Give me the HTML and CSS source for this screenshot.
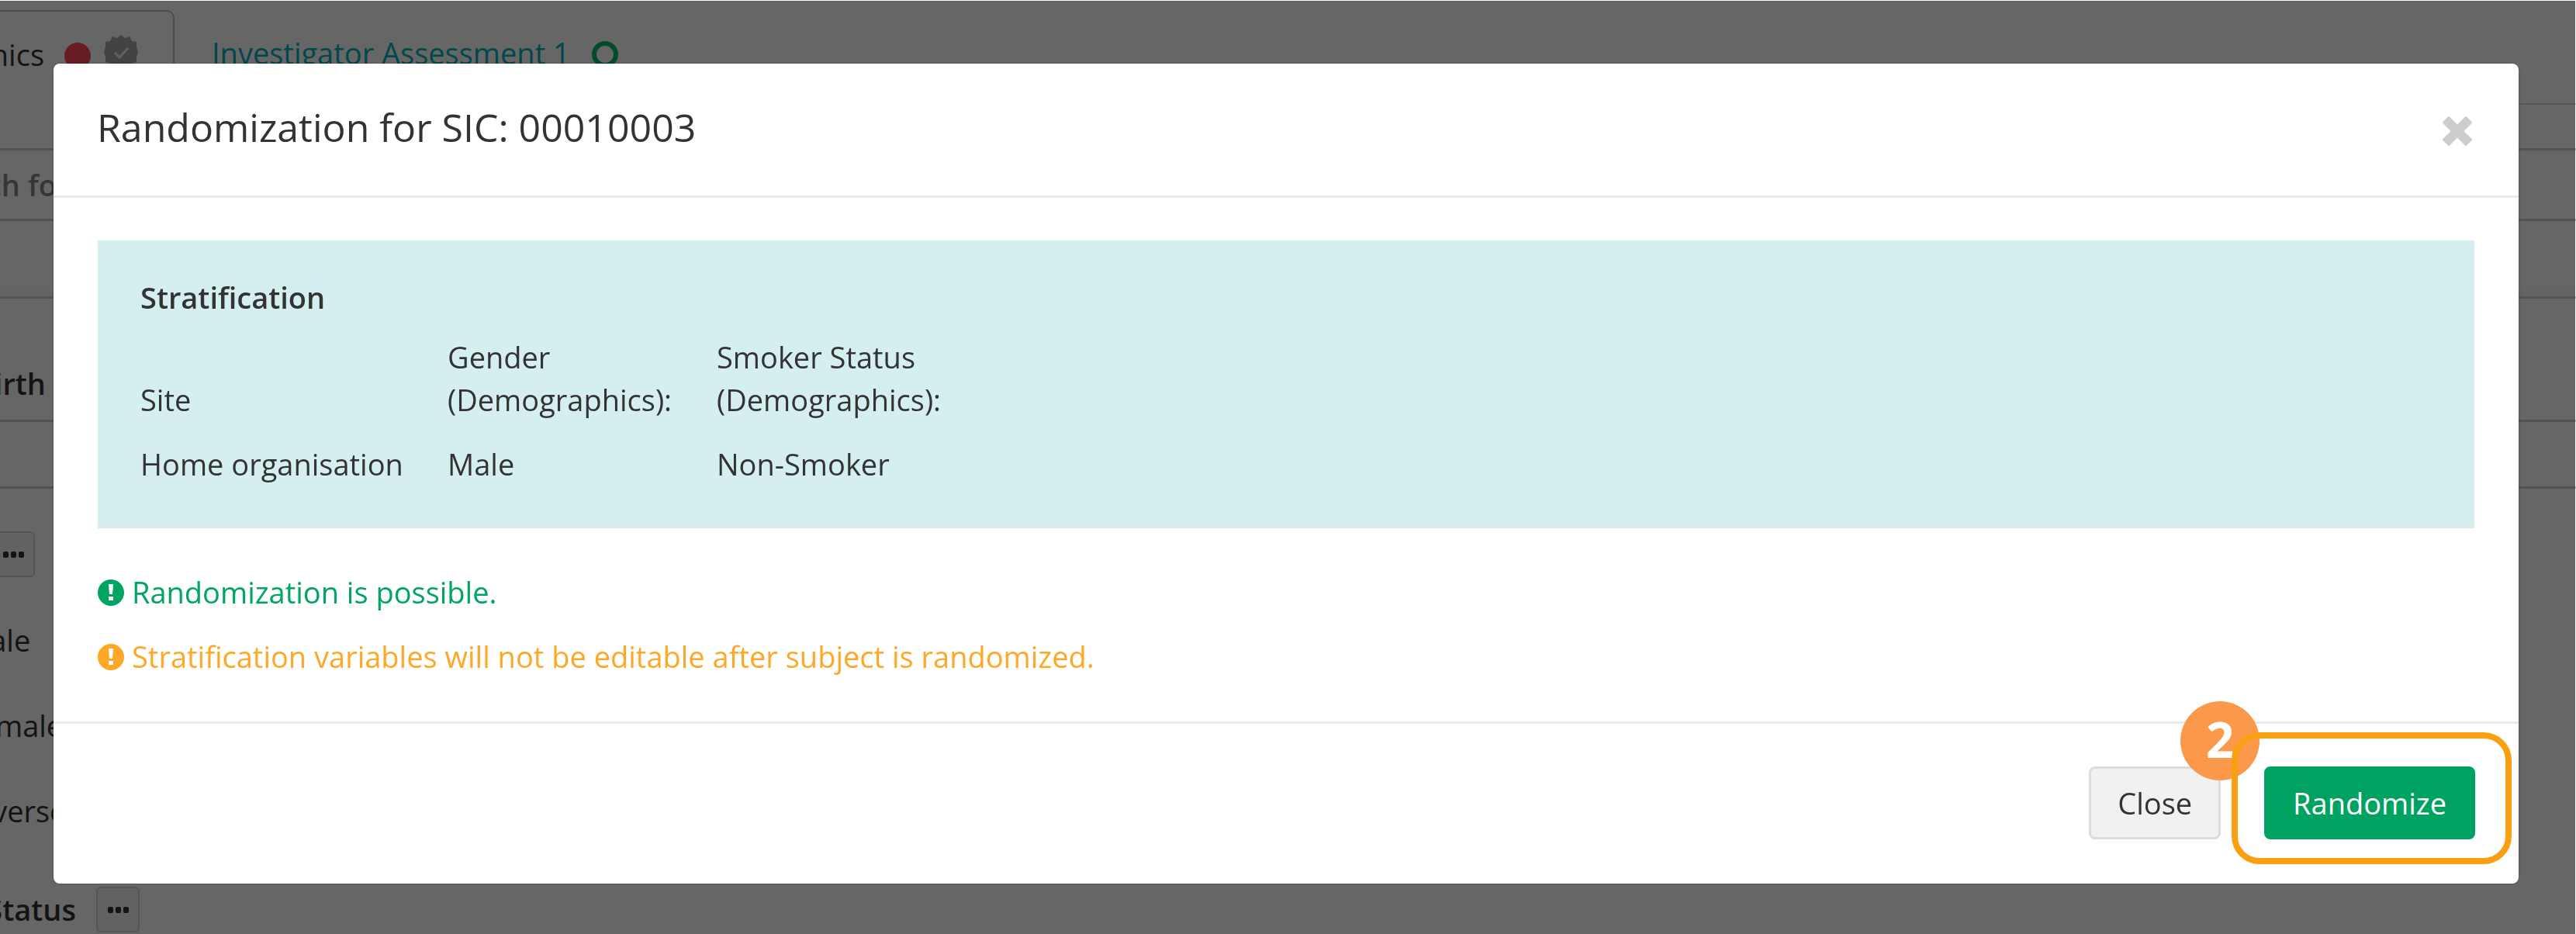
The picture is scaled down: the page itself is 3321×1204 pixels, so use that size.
FILE: index.html
```
<!DOCTYPE html>
<html lang="en">
<head>
<meta charset="utf-8">
<title>Randomization</title>
<link rel="stylesheet" href="styles.css">
</head>
<body>
<main class="page">
  <nav class="tabs">
    <a class="tab tab-active" href="#demographics">
      <span class="clip clip-tab">hics</span>
      <svg class="dot" viewBox="0 0 34 34"><circle cx="17" cy="17" r="17" fill="#ff4655"/></svg>
      <svg class="verified" viewBox="0 0 44 46"><path d="M22 0l5 4 6-2 3 6 6 1v6l2 7-2 7v6l-6 2-3 6-6-1-5 4-5-4-6 1-3-6-6-2v-6l-2-7 2-7V9l6-1 3-6 6 2z" fill="#a8a8a8"/><path d="M14 23l6 6 11-12" fill="none" stroke="#f0f0f0" stroke-width="3"/></svg>
    </a>
    <a class="tab" href="#assessment">
      <span>Investigator Assessment 1</span>
      <svg class="dot" viewBox="0 0 34 34"><circle cx="17" cy="17" r="14" fill="none" stroke="#08bc6c" stroke-width="6"/></svg>
    </a>
  </nav>
  <div class="search"><input class="field" type="text" placeholder="ch for" aria-label="Search for"></div>
  <section class="form">
    <label class="clip clip-birth" for="birth">irth</label>
    <div class="wide"><input class="field field-birth" id="birth" type="text"></div>
    <div class="more-row"><button class="more" type="button" aria-label="More"><i></i><i></i><i></i></button></div>
    <ul class="options">
      <li>Male</li>
      <li>Female</li>
      <li>Diverse</li>
    </ul>
    <div class="status-row">
      <span class="clip clip-status">Status</span>
      <button class="more" type="button" aria-label="More"><i></i><i></i><i></i></button>
    </div>
  </section>
</main>

<div class="overlay">
  <div class="modal" role="dialog" aria-labelledby="title">
    <header class="modal-header">
      <h1 class="title" id="title">Randomization for SIC: 00010003</h1>
      <button class="dismiss" type="button" aria-label="Dismiss">
        <svg viewBox="0 0 38 38"><path d="M8 8l22 22M30 8L8 30" stroke="#ccc" stroke-width="12" stroke-linecap="square" stroke-linejoin="round"/></svg>
      </button>
    </header>
    <div class="modal-body">
      <section class="strata">
        <h2 class="strata-title">Stratification</h2>
        <table class="strata-table">
          <thead><tr><th class="col-site">Site</th><th class="col-gender">Gender<br>(Demographics):</th><th>Smoker Status<br>(Demographics):</th></tr></thead>
          <tbody><tr><td>Home organisation</td><td>Male</td><td>Non-Smoker</td></tr></tbody>
        </table>
      </section>
      <p class="note note-ok">
        <svg class="note-icon" viewBox="0 0 34 34"><circle cx="17" cy="17" r="17" fill="currentColor"/><path d="M14 6h6l-1 13h-4zM14 22h6v5h-6z" fill="#fff"/></svg>
        <span>Randomization is possible.</span>
      </p>
      <p class="note note-warn">
        <svg class="note-icon" viewBox="0 0 34 34"><circle cx="17" cy="17" r="17" fill="currentColor"/><path d="M14 6h6l-1 13h-4zM14 22h6v5h-6z" fill="#fff"/></svg>
        <span>Stratification variables will not be editable after subject is randomized.</span>
      </p>
    </div>
    <footer class="modal-footer">
      <button class="btn" type="button">Close</button>
      <div class="step">
        <button class="btn btn-primary" type="button">Randomize</button>
        <span class="step-number">2</span>
        <span class="step-ring"></span>
      </div>
    </footer>
  </div>
</div>
</body>
</html>
```
FILE: styles.css
```
* { box-sizing: border-box; }

body {
  margin: 0;
  min-height: 100vh;
  overflow: hidden;
  background: #fff;
  color: #333;
  font: 38px/55px "Open Sans", sans-serif;
}

button, input { font: inherit; color: inherit; }

/* Form behind the dialog */
.page { height: 100vh; overflow: hidden; padding-top: 13px; }

.tabs { display: flex; height: 122px; }
.tab {
  display: flex;
  align-items: flex-start;
  flex: 1;
  gap: 28px;
  padding: 28px 0 0 48px;
  border-bottom: 2px solid #d8d8d8;
  color: #00b4bc;
  text-decoration: none;
}
.tab-active {
  flex: 0 0 225px;
  gap: 26px;
  padding-left: 0;
  border: solid #c0c0c0;
  border-width: 2px 2px 0 0;
  border-radius: 0 10px 0 0;
  color: #333;
}
.dot { flex: none; width: 34px; height: 34px; margin-top: 12px; }
.verified { flex: none; width: 44px; height: 46px; margin-top: 2px; }
.tab-active .verified { margin-left: -9px; }

.clip { display: flex; justify-content: flex-end; overflow: hidden; white-space: nowrap; }
.clip-tab { width: 57px; }
.clip-birth { width: 59px; font-weight: 600; }
.clip-status { width: 98px; font-weight: 600; }

.search { margin: 56px -4px 0 -20px; }
.field {
  display: block;
  width: 100%;
  height: 94px;
  padding: 0;
  border: 3px solid #c8ccd8;
  background: #fff;
}
.field::placeholder { color: #888; font-weight: 600; opacity: 1; }

.form {
  margin-top: 97px;
  padding-top: 82px;
  border-top: 3px solid #d0d0d0;
  box-shadow: 0 -8px 12px rgba(0, 0, 0, .04);
}
.wide { margin: 19px -4px 0; }
.field-birth { height: 89px; }
.more-row { display: flex; margin: 55px 0 0 -11px; }
.more {
  display: flex;
  align-items: center;
  justify-content: center;
  gap: 3px;
  width: 56px;
  height: 59px;
  padding: 0;
  border: 2px solid #d4d4d4;
  border-radius: 6px;
  background: #f4f4f4;
}
.more i { width: 7px; height: 8px; border-radius: 2px; background: #333; }
.options { margin: 54px 0 0 -47px; padding: 0; list-style: none; }
.options li { margin-bottom: 55px; }
.status-row { display: flex; align-items: center; gap: 26px; margin-top: 70px; }

/* Dialog */
.overlay {
  position: fixed;
  inset: 1px 1px 0 0;
  padding: 81px 73px 0 69px;
  background: rgba(0, 0, 0, .6);
}
.modal {
  border-radius: 8px;
  background: #fff;
  box-shadow: 0 0 3px rgba(0, 0, 0, .3);
}
.modal-header {
  display: flex;
  align-items: flex-start;
  justify-content: space-between;
  padding: 50px 60px 55px 56px;
  border-bottom: 3px solid #e7ebee;
}
.title { margin: 0; font-size: 50px; line-height: 65px; font-weight: 400; }
.dismiss { display: flex; margin-top: 18px; padding: 0; border: 0; background: none; }
.dismiss svg { width: 38px; height: 38px; }

.modal-body { padding: 55px 57px 56px; }
.strata { margin-bottom: 55px; padding: 46px 55px 27px; background: #d5eef0; }
.strata-title { margin: 0 0 22px; font-size: 38px; line-height: 55px; font-weight: 600; }
.strata-table { border-collapse: collapse; }
.strata-table th, .strata-table td { padding: 0 0 28px; font-weight: 400; text-align: left; vertical-align: bottom; }
.col-site { width: 396px; }
.col-gender { width: 347px; }

.note { display: flex; align-items: center; gap: 10px; margin: 0 0 28px; }
.note:last-child { margin-bottom: 0; }
.note-icon { width: 34px; height: 34px; }
.note-ok { color: #00a562; }
.note-warn { color: #ffa726; }

.modal-footer {
  display: flex;
  justify-content: flex-end;
  gap: 56px;
  padding: 55px 56px 57px;
  border-top: 3px solid #e7ebee;
}
.btn {
  height: 94px;
  padding: 0 34px;
  border: 3px solid #dcdcdc;
  border-radius: 8px;
  background: #f1f1f1;
}
.btn-primary { border-color: #00a262; background: #00a262; color: #fff; }

/* Numbered marker over the primary action */
.step { position: relative; }
.step-number {
  position: absolute;
  top: -84px;
  left: -108px;
  width: 102px;
  height: 102px;
  border-radius: 50%;
  background: #fb9849;
  color: #fff;
  font-size: 64px;
  font-weight: 700;
  line-height: 98px;
  text-align: center;
}
.step-ring {
  position: absolute;
  inset: -44px -47px -32px -42px;
  border: 8px solid #fb9f12;
  border-radius: 36px;
  pointer-events: none;
}
```
